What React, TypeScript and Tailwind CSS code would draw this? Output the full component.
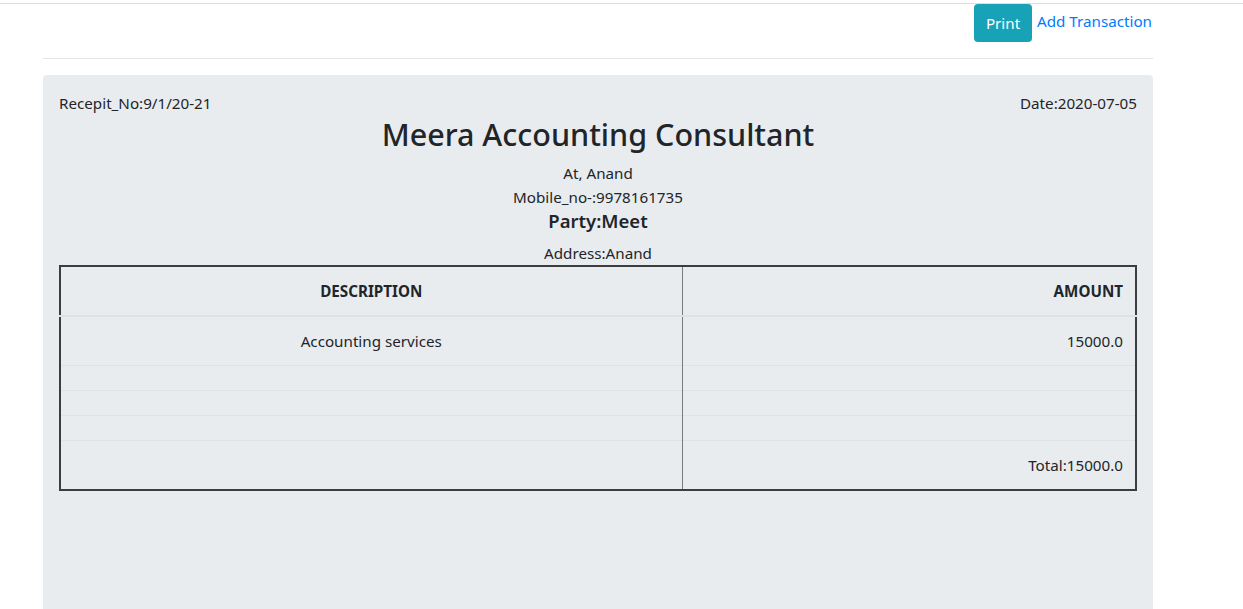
import React from "react";

const EMPTY_ROWS = [0, 1, 2];

const App: React.FC = () => {
    return (
        <div
            className="min-h-[609px] bg-white text-[#212529] text-[15.2px] leading-6"
            style={{ fontFamily: "'Noto Sans', 'Open Sans', sans-serif" }}
        >
            <div className="h-[3px]" />
            <div className="h-px bg-[#dedede]" />

            <div className="ml-[43px] w-[1110px]">
                <div className="flex justify-end items-start">
                    <button className="h-[38px] w-[58px] rounded bg-[#17a2b8] text-white text-[15.2px]">
                        Print
                    </button>
                    <a href="#" className="ml-[5px] mt-[5px] pr-px text-[#007bff]">
                        Add Transaction
                    </a>
                </div>

                <hr className="mt-4 mb-4 border-t border-[#e5e5e5]" />

                <div className="bg-[#e9ecef] rounded-t px-4 pt-4 pb-[40px] min-h-[534px]">
                    <div className="flex justify-between">
                        <span>Recepit_No:9/1/20-21</span>
                        <span>Date:2020-07-05</span>
                    </div>
                    <h2 className="text-center text-[30.5px] leading-[38px] font-medium mb-2">
                        Meera Accounting Consultant
                    </h2>
                    <div className="text-center">At, Anand</div>
                    <div className="text-center">Mobile_no-:9978161735</div>
                    <h5 className="text-center text-[18.5px] leading-6 font-semibold mb-2">
                        Party:Meet
                    </h5>
                    <div className="text-center">Address:Anand</div>

                    <table className="w-full border-collapse border-2 border-[#3d3d3d]">
                        <thead>
                            <tr>
                                <th className="w-[622px] p-3 text-center font-bold border-r border-[#7a7a7a] border-b-2 border-b-[#dee2e6]">
                                    DESCRIPTION
                                </th>
                                <th className="p-3 text-right font-bold border-b-2 border-b-[#dee2e6]">
                                    AMOUNT
                                </th>
                            </tr>
                        </thead>
                        <tbody>
                            <tr>
                                <td className="p-3 text-center border-r border-[#7a7a7a]">Accounting services</td>
                                <td className="p-3 text-right">15000.0</td>
                            </tr>
                            {EMPTY_ROWS.map((i) => (
                                <tr key={i}>
                                    <td className="h-[25px] p-0 border-t border-t-[#dee2e6] border-r border-r-[#7a7a7a]" />
                                    <td className="h-[25px] p-0 border-t border-t-[#dee2e6]" />
                                </tr>
                            ))}
                            <tr>
                                <td className="p-3 border-t border-t-[#dee2e6] border-r border-r-[#7a7a7a]" />
                                <td className="p-3 text-right border-t border-t-[#dee2e6]">Total:15000.0</td>
                            </tr>
                        </tbody>
                    </table>
                </div>
            </div>
        </div>
    );
};

export default App;
